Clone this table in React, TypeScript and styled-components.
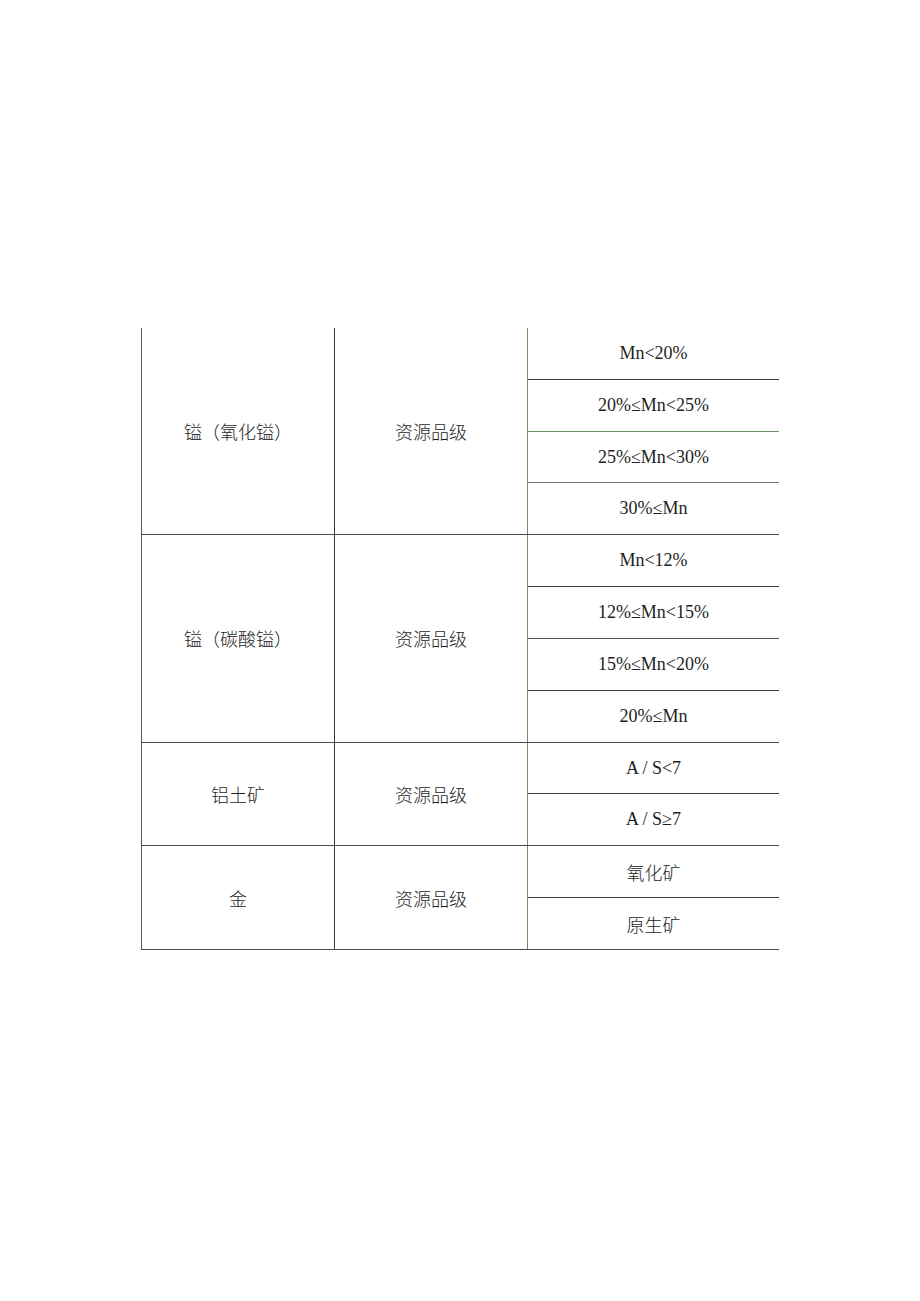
import React from 'react'
import styled, { createGlobalStyle } from 'styled-components'

const GlobalStyle = createGlobalStyle`
  html, body {
    margin: 0;
    padding: 0;
    background: #ffffff;
  }
`;

const SPage = styled.div`
  width: 920px;
  min-height: 1301px;
  padding: 328px 0 0 141px;
  box-sizing: border-box;
  font-family: 'Liberation Serif', 'Noto Sans CJK SC', serif;
  color: #1e1e1e;
`;

const STable = styled.div`
  width: 638px;
  display: flex;
  flex-direction: column;
`;

const SGroup = styled.div`
  display: flex;
  border-bottom: 1px solid #4a4a4a;
`;

const SCell = styled.div`
  box-sizing: border-box;
  display: flex;
  align-items: center;
  justify-content: center;
  font-size: 18px;
`;

const SNameCell = styled(SCell)`
  width: 194px;
  border-left: 1px solid #5a5a5a;
  border-right: 1px solid #3a3a3a;
  font-family: 'Noto Sans CJK SC', sans-serif;
  font-weight: 300;
`;

const SGradeCell = styled(SCell)`
  width: 193px;
  border-right: 1px solid #6e9262;
  font-family: 'Noto Sans CJK SC', sans-serif;
  font-weight: 300;
`;

const SSubList = styled.div`
  width: 251px;
  display: flex;
  flex-direction: column;
`;

const SSubCell = styled(SCell)<{ $line?: string; $cjk?: boolean }>`
  height: 51.83px;
  border-bottom: 1px solid ${p => p.$line || '#3c3c3c'};
  font-family: ${p => (p.$cjk ? "'Noto Sans CJK SC', sans-serif" : "'Liberation Serif', 'Noto Sans CJK SC', serif")};
  font-weight: ${p => (p.$cjk ? 300 : 400)};
  &:last-child {
    height: 50.83px;
    border-bottom: none;
  }
`;

interface ISub {
  text: string
  line?: string
  cjk?: boolean
}

interface IGroup {
  name: string
  grade: string
  subs: ISub[]
}

const groups: IGroup[] = [
  {
    name: '镒（氧化镒）',
    grade: '资源品级',
    subs: [
      { text: 'Mn<20%' },
      { text: '20%≤Mn<25%', line: '#6f8d6a' },
      { text: '25%≤Mn<30%', line: '#7d6a80' },
      { text: '30%≤Mn' },
    ],
  },
  {
    name: '镒（碳酸镒）',
    grade: '资源品级',
    subs: [
      { text: 'Mn<12%' },
      { text: '12%≤Mn<15%', line: '#555555' },
      { text: '15%≤Mn<20%' },
      { text: '20%≤Mn' },
    ],
  },
  {
    name: '铝土矿',
    grade: '资源品级',
    subs: [
      { text: 'A / S<7' },
      { text: 'A / S≥7' },
    ],
  },
  {
    name: '金',
    grade: '资源品级',
    subs: [
      { text: '氧化矿', cjk: true },
      { text: '原生矿', cjk: true },
    ],
  },
]

const App: React.FC = () => {
  return (
    <SPage>
      <GlobalStyle />
      <STable>
        {groups.map(g => (
          <SGroup key={g.name}>
            <SNameCell>{g.name}</SNameCell>
            <SGradeCell>{g.grade}</SGradeCell>
            <SSubList>
              {g.subs.map(s => (
                <SSubCell key={s.text} $line={s.line} $cjk={s.cjk}>
                  {s.text}
                </SSubCell>
              ))}
            </SSubList>
          </SGroup>
        ))}
      </STable>
    </SPage>
  )
}

export default App
